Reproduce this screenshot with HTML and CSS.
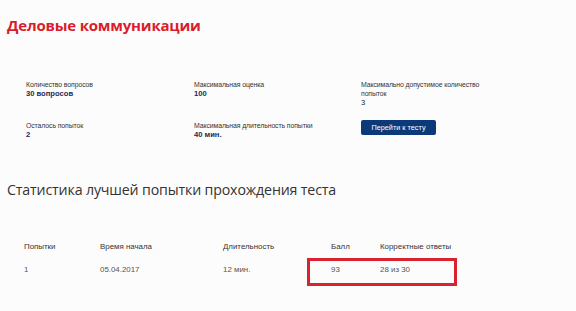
FILE: index.html
```html
<!DOCTYPE html>
<html lang="ru">
<head>
<meta charset="utf-8">
<link rel="stylesheet" href="styles.css">
</head>
<body>
<div class="page">
  <h1 class="title">Деловые коммуникации</h1>
  <div class="info">
    <div class="item">
      <div class="label">Количество вопросов</div>
      <div class="value">30 вопросов</div>
    </div>
    <div class="item">
      <div class="label">Максимальная оценка</div>
      <div class="value">100</div>
    </div>
    <div class="item narrow">
      <div class="label">Максимально допустимое количество попыток</div>
      <div class="value thin">3</div>
    </div>
    <div class="item">
      <div class="label">Осталось попыток</div>
      <div class="value">2</div>
    </div>
    <div class="item">
      <div class="label">Максимальная длительность попытки</div>
      <div class="value">40 мин.</div>
    </div>
    <div class="item">
      <button class="btn">Перейти к тесту</button>
    </div>
  </div>
  <h2 class="subtitle">Статистика лучшей попытки прохождения теста</h2>
  <div class="table">
    <div class="row head">
      <div>Попытки</div><div>Время начала</div><div>Длительность</div><div>Балл</div><div>Корректные ответы</div>
    </div>
    <div class="row body">
      <div>1</div><div>05.04.2017</div><div>12 мин.</div><div>93</div><div>28 из 30</div>
      <span class="highlight"></span>
    </div>
  </div>
</div>
</body>
</html>
```
FILE: styles.css
```css
html, body {
  margin: 0;
  padding: 0;
  background: #fdfcfc;
}
.page {
  width: 576px;
  height: 311px;
  box-sizing: border-box;
  padding: 15px 0 0 7px;
  font-family: "Liberation Sans", Arial, sans-serif;
  overflow: hidden;
}
.title {
  margin: 0;
  font-family: "Open Sans", sans-serif;
  font-weight: 700;
  font-size: 15px;
  line-height: 21px;
  color: #d81e2c;
  letter-spacing: -0.2px;
}
.info {
  display: grid;
  grid-template-columns: 168px 167px 125px;
  row-gap: 13px;
  margin: 44px 0 0 19px;
}
.item {
  min-height: 26px;
}
.label {
  font-size: 6.9px;
  line-height: 9px;
  color: #333;
  letter-spacing: -0.1px;
}
.value {
  font-size: 7.6px;
  line-height: 10px;
  font-weight: 700;
  color: #1a2d57;
}
.value.thin {
  font-weight: 400;
  color: #222;
}
.btn {
  display: block;
  margin-top: -1px;
  width: 75px;
  height: 15px;
  padding: 0;
  border: none;
  border-radius: 2px;
  background: #0c3a78;
  color: #fff;
  font-family: "Liberation Sans", Arial, sans-serif;
  font-size: 7.3px;
  line-height: 15px;
}
.subtitle {
  margin: 33px 0 0 0;
  font-family: "Open Sans", sans-serif;
  font-weight: 400;
  font-size: 14.2px;
  line-height: 20px;
  color: #333;
  letter-spacing: -0.15px;
}
.table {
  margin: 42px 0 0 17px;
}
.row {
  display: grid;
  grid-template-columns: 76px 123px 108px 49px 120px;
  font-size: 7.9px;
  line-height: 10px;
}
.row.head {
  color: #333;
}
.row.body {
  position: relative;
  margin-top: 13px;
  color: #555;
}
.highlight {
  position: absolute;
  left: 283px;
  top: -7px;
  width: 144px;
  height: 22px;
  border: 3px solid #d9222f;
}
```
